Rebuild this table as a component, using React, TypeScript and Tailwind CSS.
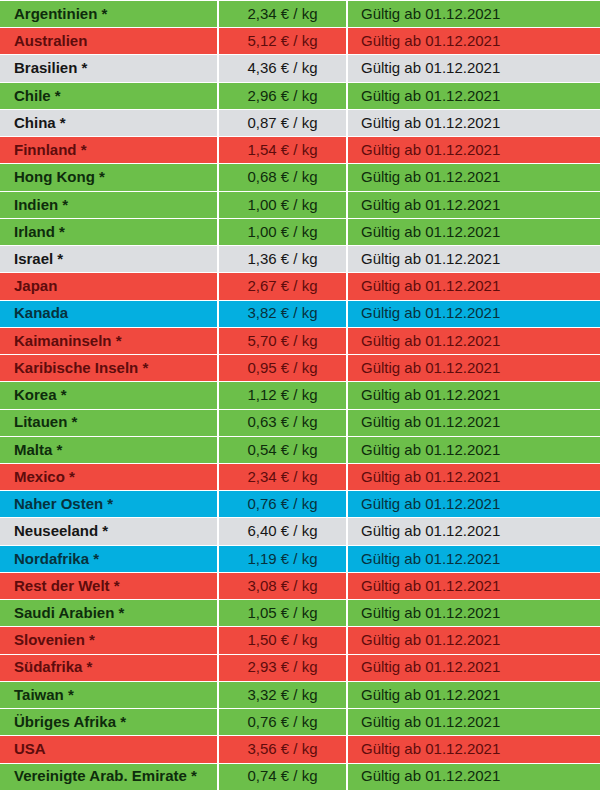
import React from 'react';

type Tone = 'green' | 'red' | 'gray' | 'blue';

const rows: [string, string, Tone][] = [
  ['Argentinien *', '2,34', 'green'],
  ['Australien', '5,12', 'red'],
  ['Brasilien *', '4,36', 'gray'],
  ['Chile *', '2,96', 'green'],
  ['China *', '0,87', 'gray'],
  ['Finnland *', '1,54', 'red'],
  ['Hong Kong *', '0,68', 'green'],
  ['Indien *', '1,00', 'green'],
  ['Irland *', '1,00', 'green'],
  ['Israel *', '1,36', 'gray'],
  ['Japan', '2,67', 'red'],
  ['Kanada', '3,82', 'blue'],
  ['Kaimaninseln *', '5,70', 'red'],
  ['Karibische Inseln *', '0,95', 'red'],
  ['Korea *', '1,12', 'green'],
  ['Litauen *', '0,63', 'green'],
  ['Malta *', '0,54', 'green'],
  ['Mexico *', '2,34', 'red'],
  ['Naher Osten *', '0,76', 'blue'],
  ['Neuseeland *', '6,40', 'gray'],
  ['Nordafrika *', '1,19', 'blue'],
  ['Rest der Welt *', '3,08', 'red'],
  ['Saudi Arabien *', '1,05', 'green'],
  ['Slovenien *', '1,50', 'red'],
  ['Südafrika *', '2,93', 'red'],
  ['Taiwan *', '3,32', 'green'],
  ['Übriges Afrika *', '0,76', 'green'],
  ['USA', '3,56', 'red'],
  ['Vereinigte Arab. Emirate *', '0,74', 'green'],
];

const toneClass: Record<Tone, string> = {
  green: 'bg-[#6cbf4a] text-[#0e2c0c]',
  red: 'bg-[#f0493f] text-[#5e0c0c]',
  gray: 'bg-[#dcdee1] text-[#161616]',
  blue: 'bg-[#04afe0] text-[#07323d]',
};

export default function App() {
  return (
    <div
      className="w-[600px] h-[790px] flex flex-col bg-white text-[15px]"
      style={{ fontFamily: '"Liberation Sans", Arial, sans-serif' }}
    >
      {rows.map(([country, price, tone]) => (
        <div
          key={country}
          className={`flex-1 flex items-center border-t border-white ${toneClass[tone]}`}
        >
          <div className="w-[219px] h-full flex items-center pl-[14px] font-bold border-r-2 border-white">
            {country}
          </div>
          <div className="w-[129px] h-full flex items-center justify-center border-r-2 border-white">
            {price} € / kg
          </div>
          <div className="flex-1 h-full flex items-center pl-[13px]">Gültig ab 01.12.2021</div>
        </div>
      ))}
    </div>
  );
}
